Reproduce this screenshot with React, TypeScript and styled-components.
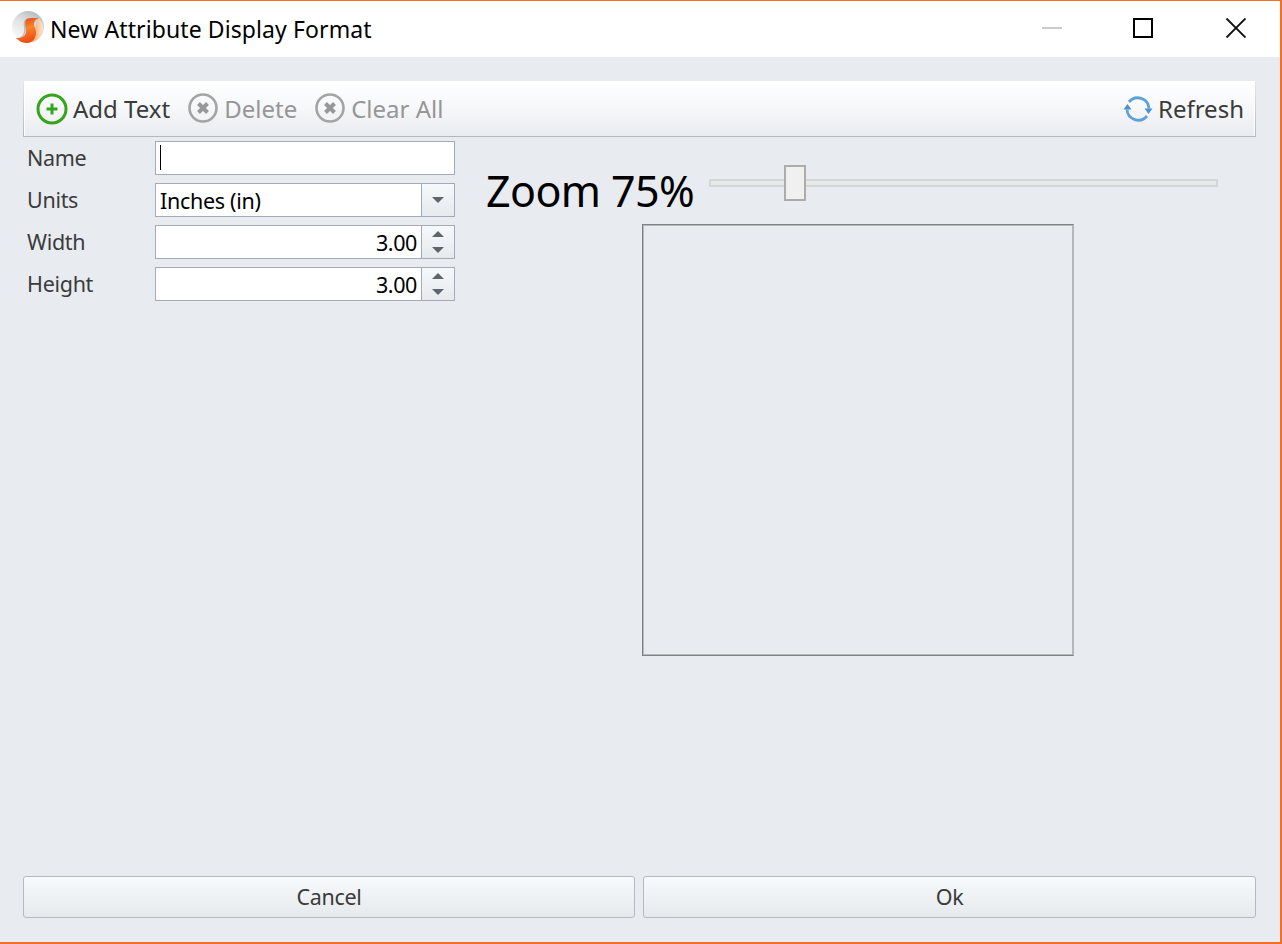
import React from "react";
import styled, { createGlobalStyle } from "styled-components";

const GlobalStyle = createGlobalStyle`
  * { box-sizing: border-box; }
  body { margin: 0; background: #e8ebf0; }
`;

const Window = styled.div`
  display: flex;
  flex-direction: column;
  width: 1282px;
  height: 944px;
  border: solid #f36f25;
  border-width: 1px 2px 2px 0;
  background: #e8ebf0;
  font-family: "Noto Sans", sans-serif;
  overflow: hidden;
`;

const TitleBar = styled.header`
  display: flex;
  align-items: center;
  height: 56px;
  flex: none;
  padding: 0 34px 2px 11px;
  background: #fff;
`;

const Title = styled.h1`
  flex: 1;
  margin: 2px 0 0 3px;
  font-size: 23px;
  font-weight: 400;
  line-height: 32px;
  letter-spacing: 0.1px;
  color: #000;
  white-space: nowrap;
`;

const WindowControls = styled.div`
  display: flex;
  align-items: center;
  gap: 67px;
`;

const Body = styled.main`
  display: flex;
  flex-direction: column;
  flex: 1;
  padding: 24px 24px 24px 23px;
`;

const Toolbar = styled.div`
  display: flex;
  align-items: center;
  height: 56px;
  flex: none;
  padding: 0 11px 0 12px;
  border: 1px solid;
  border-top: 0;
  border-image: linear-gradient(#e4e7eb, #b3b8bf) 1;
  background: linear-gradient(#ffffff, #f7f8fa 45%, #e9ecf0);
  box-shadow: inset 1px 0 #fff, inset -1px 0 #fff;
`;

const ToolButton = styled.button<{ $muted?: boolean; $gap?: number; $spacing?: number }>`
  display: flex;
  align-items: center;
  gap: 5px;
  margin: 0 ${(p) => p.$gap ?? 0}px 0 0;
  padding: 0;
  border: 0;
  background: none;
  font: 400 24px/32px "Noto Sans", sans-serif;
  letter-spacing: ${(p) => p.$spacing ?? 0}px;
  color: ${(p) => (p.$muted ? "#969696" : "#3b3b3b")};
  white-space: nowrap;

  svg { flex: none; }
`;

const Spacer = styled.div`
  flex: 1;
`;

const Content = styled.div`
  display: flex;
  flex: 1;
  padding-top: 4px;
`;

const Form = styled.form`
  display: flex;
  flex-direction: column;
  gap: 8px;
  width: 432px;
`;

const Row = styled.div`
  display: flex;
  align-items: center;
  height: 34px;
`;

const Label = styled.label<{ $spacing: number }>`
  width: 132px;
  padding-left: 4px;
  font-size: 21.5px;
  line-height: 34px;
  letter-spacing: ${(p) => p.$spacing}px;
  color: #3b3b3b;
`;

const Field = styled.div`
  display: flex;
  width: 300px;
  height: 34px;
  border: 1px solid #a3abb5;
  background: #fff;
`;

const Value = styled.span<{ $right?: boolean; $spacing: number }>`
  flex: 1;
  padding: 0 4px;
  font-size: 21.5px;
  line-height: 33px;
  letter-spacing: ${(p) => p.$spacing}px;
  text-align: ${(p) => (p.$right ? "right" : "left")};
  color: #000;
`;

const Caret = styled.span`
  width: 1px;
  height: 25px;
  margin: 3px 0 0 4px;
  background: #000;
`;

const FieldButton = styled.span`
  display: flex;
  flex-direction: column;
  align-items: center;
  justify-content: center;
  gap: 10px;
  width: 33px;
  border-left: 1px solid #a3abb5;
  background: linear-gradient(#f6f9fb, #e6eaed);
`;

const Arrow = styled.i<{ $up?: boolean }>`
  width: 12px;
  height: 6px;
  background: #5e666d;
  clip-path: ${(p) => (p.$up ? "polygon(50% 0, 100% 100%, 0 100%)" : "polygon(0 0, 100% 0, 50% 100%)")};
`;

const Preview = styled.section`
  display: flex;
  flex-direction: column;
  flex: 1;
  padding-left: 31px;
`;

const ZoomRow = styled.div`
  display: flex;
  align-items: flex-start;
  height: 83px;
`;

const ZoomLabel = styled.span`
  width: 223px;
  padding-top: 20px;
  font-size: 43px;
  line-height: 60px;
  letter-spacing: -0.6px;
  color: #000;
  white-space: nowrap;
`;

const Slider = styled.div`
  display: flex;
  align-items: center;
  width: 509px;
  height: 36px;
  margin-top: 24px;
`;

const Track = styled.div<{ $width: number; $side: "left" | "right" }>`
  width: ${(p) => p.$width}px;
  height: 8px;
  border: 2px solid #d5d6d8;
  border-${(p) => (p.$side === "left" ? "right" : "left")}: 0;
  background: #e7eaea;
`;

const Thumb = styled.div`
  width: 22px;
  height: 36px;
  border: 2px solid #acacac;
  background: #f0f0f0;
`;

const Canvas = styled.div`
  width: 432px;
  height: 432px;
  margin-left: 156px;
  border: 1px solid;
  border-color: #7f8183 #b2b4b7 #7f8183 #7f8183;
  box-shadow: inset 1px 1px #b5b7ba, inset -1px -1px #b5b7ba;
`;

const Actions = styled.footer`
  display: grid;
  grid-template-columns: 612px 613px;
  gap: 8px;
`;

const ActionButton = styled.button<{ $spacing: number }>`
  height: 42px;
  padding: 0;
  border: 1px solid #b6babf;
  border-radius: 3px;
  background: linear-gradient(#f7fafd, #e6eaec);
  font: 400 21.5px/40px "Noto Sans", sans-serif;
  letter-spacing: ${(p) => p.$spacing}px;
  color: #3b3b3b;
`;

const AppLogo = () => (
  <svg width="36" height="36" viewBox="0 0 36 36">
    <defs>
      <linearGradient id="sphere" x1="0.75" y1="0" x2="0.25" y2="1">
        <stop offset="0" stopColor="#b4b8ba" />
        <stop offset="0.4" stopColor="#dedfe1" />
        <stop offset="1" stopColor="#ffffff" />
      </linearGradient>
      <linearGradient id="ribbon" x1="0" y1="0" x2="0.3" y2="1">
        <stop offset="0" stopColor="#e23b12" />
        <stop offset="0.5" stopColor="#f7842a" />
        <stop offset="1" stopColor="#ee4f16" />
      </linearGradient>
      <linearGradient id="glow" x1="0" y1="0" x2="1" y2="0">
        <stop offset="0" stopColor="#f6a45c" />
        <stop offset="1" stopColor="#fde3cc" />
      </linearGradient>
    </defs>
    <circle cx="17" cy="17" r="16" fill="url(#sphere)" />
    <path d="M28 8 C32 13 34 20 30 26 C27 30 23 32 20 32 C24 25 22 18 28 8Z" fill="url(#glow)" />
    <path d="M5 28 C11 28 14 24 13 17 C12 11 14 8 18 8 L15 18 C15 24 12 29 6 29Z" fill="#b9bbbd" />
    <path d="M28 8 C23 10 22 13 24 18 C27 25 23 33 16 33 C11 33 8 31 5 28 C12 29 16 25 15 18 C13 11 15 8 20 8Z" fill="url(#ribbon)" />
  </svg>
);

const AddIcon = () => (
  <svg width="32" height="32" viewBox="0 0 32 32" fill="none" stroke="#36a41d">
    <circle cx="16" cy="16" r="14" strokeWidth="3" />
    <path d="M16 10.5V21.5M10.5 16H21.5" strokeWidth="3" />
  </svg>
);

const RemoveIcon = () => (
  <svg width="32" height="32" viewBox="0 0 32 32" fill="none" stroke="#a4a4a4">
    <circle cx="16" cy="15" r="13.5" strokeWidth="2.6" />
    <path d="M11.5 10.5L20.5 19.5M20.5 10.5L11.5 19.5" stroke="#989898" strokeWidth="4" />
  </svg>
);

const RefreshIcon = () => (
  <svg width="30" height="30" viewBox="0 0 30 30" fill="none" stroke="#5ca2d9" strokeWidth="2.8">
    <path d="M6 8A11.3 11.3 0 0 1 26 14.5" />
    <path d="M24 22A11.3 11.3 0 0 1 4 15.5" />
    <path d="M21.5 14.5H29.5L25.5 20Z M0.5 15.5H8.5L4.5 10Z" fill="#4b93d0" stroke="none" />
  </svg>
);

const Controls = () => (
  <WindowControls>
    <svg width="24" height="20" viewBox="0 0 24 20">
      <path d="M0 10H20" stroke="#cbcbcb" strokeWidth="2" />
    </svg>
    <svg width="20" height="20" viewBox="0 0 20 20">
      <rect x="1" y="1" width="18" height="18" fill="none" stroke="#000" strokeWidth="2" />
    </svg>
    <svg width="26" height="20" viewBox="0 0 26 20">
      <path d="M6.5 0.5L25.5 19.5M25.5 0.5L6.5 19.5" stroke="#111" strokeWidth="1.9" />
    </svg>
  </WindowControls>
);

const Spinner = () => (
  <FieldButton>
    <Arrow $up />
    <Arrow />
  </FieldButton>
);

export default function App() {
  return (
    <>
      <GlobalStyle />
      <Window>
        <TitleBar>
          <AppLogo />
          <Title>New Attribute Display Format</Title>
          <Controls />
        </TitleBar>
        <Body>
          <Toolbar>
            <ToolButton type="button" $gap={17}>
              <AddIcon />
              Add Text
            </ToolButton>
            <ToolButton type="button" $muted $gap={17}>
              <RemoveIcon />
              Delete
            </ToolButton>
            <ToolButton type="button" $muted>
              <RemoveIcon />
              Clear All
            </ToolButton>
            <Spacer />
            <ToolButton type="button">
              <RefreshIcon />
              Refresh
            </ToolButton>
          </Toolbar>
          <Content>
            <Form>
              <Row>
                <Label $spacing={-0.3}>Name</Label>
                <Field>
                  <Caret />
                </Field>
              </Row>
              <Row>
                <Label $spacing={-0.3}>Units</Label>
                <Field>
                  <Value $spacing={-0.3}>Inches (in)</Value>
                  <FieldButton>
                    <Arrow />
                  </FieldButton>
                </Field>
              </Row>
              <Row>
                <Label $spacing={-0.3}>Width</Label>
                <Field>
                  <Value $right $spacing={-0.4}>3.00</Value>
                  <Spinner />
                </Field>
              </Row>
              <Row>
                <Label $spacing={-0.3}>Height</Label>
                <Field>
                  <Value $right $spacing={-0.4}>3.00</Value>
                  <Spinner />
                </Field>
              </Row>
            </Form>
            <Preview>
              <ZoomRow>
                <ZoomLabel>Zoom 75%</ZoomLabel>
                <Slider>
                  <Track $width={75} $side="left" />
                  <Thumb />
                  <Track $width={412} $side="right" />
                </Slider>
              </ZoomRow>
              <Canvas />
            </Preview>
          </Content>
          <Actions>
            <ActionButton type="button" $spacing={-0.3}>Cancel</ActionButton>
            <ActionButton type="button" $spacing={-0.3}>Ok</ActionButton>
          </Actions>
        </Body>
      </Window>
    </>
  );
}
